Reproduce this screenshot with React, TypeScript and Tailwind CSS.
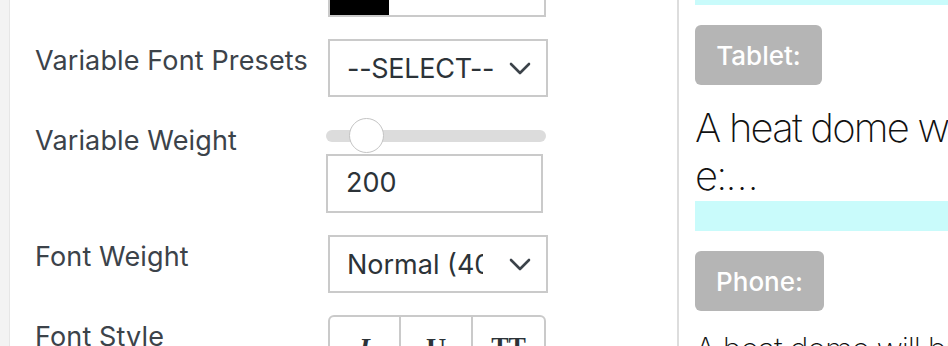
import React from 'react';

const Chevron: React.FC = () => (
  <svg width="22" height="13" viewBox="0 0 22 13" fill="none" className="shrink-0">
    <path d="M2 2l9 9 9-9" stroke="#3c434a" strokeWidth="2.6" strokeLinecap="round" strokeLinejoin="round" />
  </svg>
);

const Label: React.FC<{ text: string }> = ({ text }) => (
  <div className="pt-[7px] text-[27px] leading-[30px] tracking-[0.005em] text-[#3c434a]">{text}</div>
);

const SelectBox: React.FC<{ value: string; clip: string }> = ({ value, clip }) => (
  <div className="ml-[2px] flex h-[58px] w-[220px] items-center justify-between border-2 border-[#cacaca] bg-white pl-[17px] pr-[15px]">
    <span className={`${clip} overflow-hidden whitespace-nowrap text-[27px] leading-none text-[#2c3338]`}>{value}</span>
    <Chevron />
  </div>
);

const App: React.FC = () => {
  return (
    <div
      className="flex h-[346px] w-[948px] overflow-hidden bg-white"
      style={{ fontFamily: 'Inter, "Noto Sans", sans-serif' }}
    >
      {/* admin strip */}
      <div className="w-[10px] shrink-0 border-r border-[#e6e6e6] bg-[#f3f3f3]" />

      {/* settings panel */}
      <div className="w-[667px] shrink-0 pl-[25px]">
        <div className="-mt-[41px] grid grid-cols-[291px_222px] gap-y-[22px]">
          {/* Color */}
          <div />
          <div className="ml-[2px] flex h-[58px] w-[218px] border-2 border-[#cacaca]">
            <div className="h-full w-[59px] bg-black" />
          </div>

          <Label text="Variable Font Presets" />
          <SelectBox value="--SELECT--" clip="w-[160px] tracking-[-0.01em]" />

          <Label text="Variable Weight" />
          <div className="-mt-[1px] flex flex-col">
            <div className="relative flex h-[36px] w-[220px] items-center">
              <div className="h-[12px] w-full rounded-full bg-[#dcdcdc]" />
              <div className="absolute left-[23px] top-[0px] h-[35px] w-[35px] rounded-full border-[1.5px] border-[#c4c4c4] bg-white" />
            </div>
            <div className="flex h-[59px] w-[217px] items-center border-2 border-[#cacaca] pl-[18px] text-[27px] text-[#2c3338]">
              200
            </div>
          </div>

          <Label text="Font Weight" />
          <SelectBox value="Normal (400)" clip="w-[136px]" />

          <Label text="Font Style" />
          <div className="ml-[2px] flex h-[58px] w-[218px] overflow-hidden rounded-t-[6px] border-2 border-[#cacaca]">
            <div className="flex w-[71px] justify-center border-r-2 border-[#cacaca] pt-[10px] text-[28px] font-bold italic text-[#2c3338]" style={{ fontFamily: '"Liberation Serif", serif' }}>
              I
            </div>
            <div className="flex w-[72px] justify-center border-r-2 border-[#cacaca] pt-[10px] text-[28px] font-bold text-[#2c3338]" style={{ fontFamily: '"Liberation Serif", serif' }}>
              U
            </div>
            <div className="flex flex-1 justify-center pt-[10px] text-[26px] font-bold text-[#2c3338]" style={{ fontFamily: '"Liberation Serif", serif' }}>
              TT
            </div>
          </div>
        </div>
      </div>

      {/* divider */}
      <div className="w-[2px] shrink-0 bg-[#dddddd]" />

      {/* preview */}
      <div className="min-w-0 flex-1 overflow-hidden pl-[16px]">
        <div className="h-[5px] w-[400px] bg-[#c9fbfb]" />
        <div className="mt-[20px] flex h-[60px] w-[127px] items-center justify-center rounded-[6px] bg-[#b5b5b5] text-[26px] font-medium text-white">
          Tablet:
        </div>
        <div className="mt-[19px] whitespace-nowrap text-[40px] font-extralight leading-[48px] tracking-[-0.045em] text-[#111111]">
          <div>A heat dome will bring scorching heat to th</div>
          <div>e:…</div>
        </div>
        <div className="mt-[1px] h-[30px] w-[400px] bg-[#c9fbfb]" />
        <div className="mt-[20px] flex h-[60px] w-[129px] items-center justify-center rounded-[6px] bg-[#b5b5b5] text-[26px] font-medium text-white">
          Phone:
        </div>
        <div className="mt-[16px] whitespace-nowrap text-[32px] font-extralight leading-[45px] tracking-[-0.035em] text-[#111111]">
          A heat dome will bring scorching heat
        </div>
      </div>
    </div>
  );
};

export default App;
